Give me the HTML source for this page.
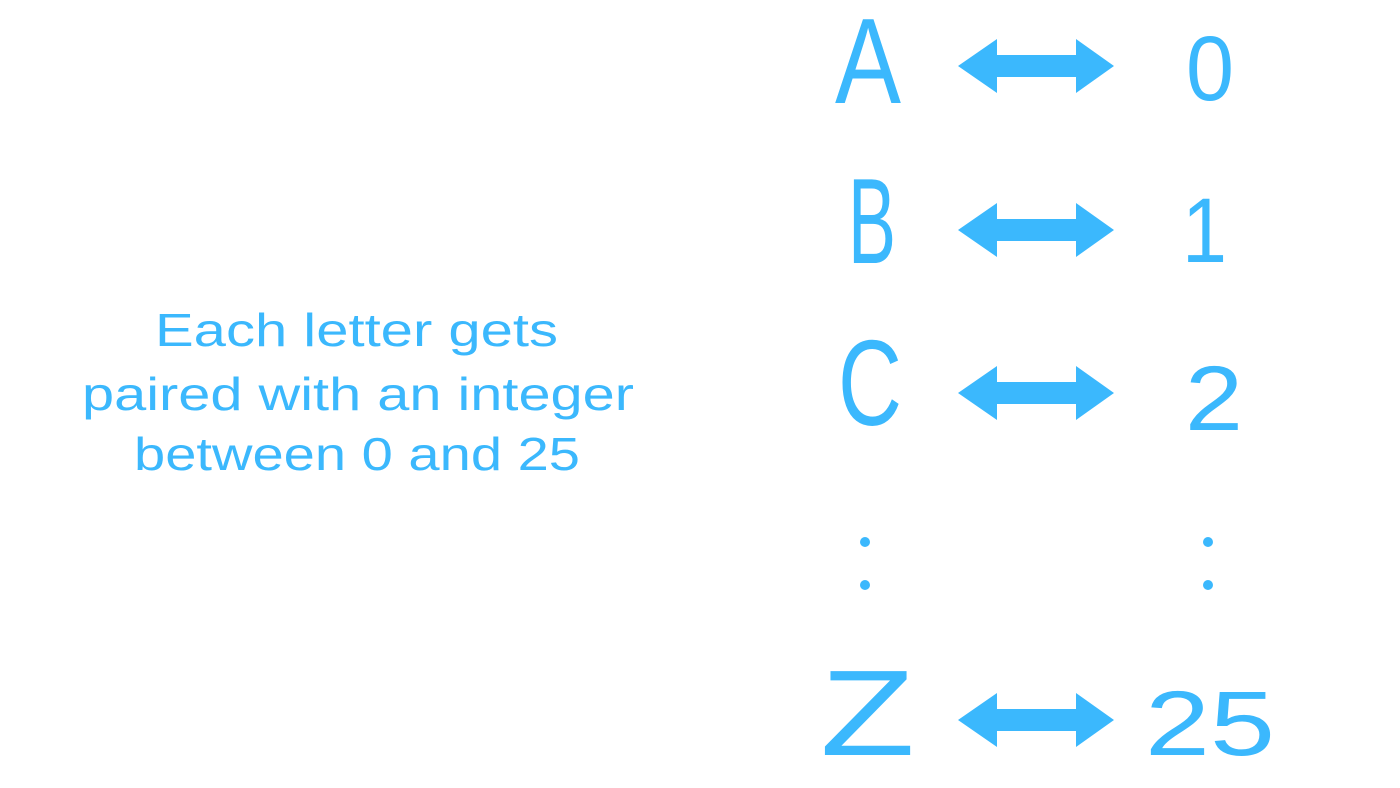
<!DOCTYPE html>
<html><head><meta charset="utf-8"><style>html,body{margin:0;padding:0;background:#fff}svg{display:block}</style></head>
<body>
<svg width="1400" height="788" viewBox="0 0 1400 788" xmlns="http://www.w3.org/2000/svg">
<g fill="#3bb8fd">
<polygon points="958,66 997,39 997,55 1076,55 1076,39 1114,66 1076,93 1076,77 997,77 997,93"/>
<polygon points="958,230 997,203 997,219 1076,219 1076,203 1114,230 1076,257 1076,241 997,241 997,257"/>
<polygon points="958,393 997,366 997,382 1076,382 1076,366 1114,393 1076,420 1076,404 997,404 997,420"/>
<polygon points="958,720 997,693 997,709 1076,709 1076,693 1114,720 1076,747 1076,731 997,731 997,747"/>
</g>
<g fill="#3bb8fd" font-family="Liberation Sans, DejaVu Sans, sans-serif" font-size="122">
<text x="835" y="103" textLength="66" lengthAdjust="spacingAndGlyphs">A</text>
<text x="848" y="263" textLength="48" lengthAdjust="spacingAndGlyphs">B</text>
<text x="838" y="425" textLength="64" lengthAdjust="spacingAndGlyphs">C</text>
<text x="820" y="755" textLength="95" lengthAdjust="spacingAndGlyphs">Z</text>
</g>
<g fill="#3bb8fd" font-family="Liberation Sans, DejaVu Sans, sans-serif" font-size="92">
<text x="1186" y="100" textLength="48" lengthAdjust="spacingAndGlyphs">0</text>
<text x="1182" y="262" textLength="45" lengthAdjust="spacingAndGlyphs">1</text>
<text x="1185" y="430" textLength="58" lengthAdjust="spacingAndGlyphs">2</text>
<text x="1145" y="755" textLength="130" lengthAdjust="spacingAndGlyphs">25</text>
</g>
<g fill="#3bb8fd">
<circle cx="865" cy="542" r="5"/><circle cx="865" cy="585" r="5"/>
<circle cx="1208" cy="542" r="5"/><circle cx="1208" cy="585" r="5"/>
</g>
<g fill="#3bb8fd" font-family="Liberation Sans, DejaVu Sans, sans-serif" font-size="46">
<text x="155" y="346" textLength="403" lengthAdjust="spacingAndGlyphs">Each letter gets</text>
<text x="82" y="410" textLength="552" lengthAdjust="spacingAndGlyphs">paired with an integer</text>
<text x="134" y="470" textLength="446" lengthAdjust="spacingAndGlyphs">between 0 and 25</text>
</g>
</svg>
</body></html>
